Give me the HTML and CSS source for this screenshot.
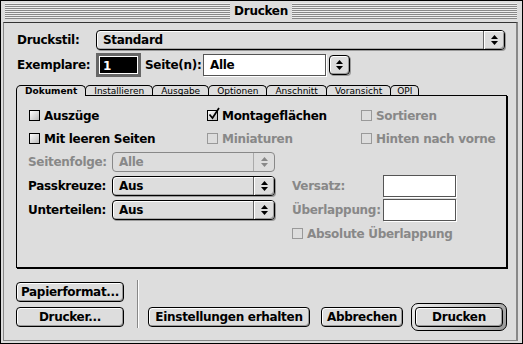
FILE: index.html
```html
<!DOCTYPE html>
<html lang="de">
<head>
    <meta charset="UTF-8">
    <title>Drucken</title>
    <link rel="stylesheet" href="styles.css">
</head>
<body>
<div class="window">
    <div class="titlebar">
        <div class="stripes"><span class="title">Drucken</span></div>
    </div>

    <div class="content">
        <div class="row row-style">
            <span class="label label-main">Druckstil:</span>
            <div class="popup popup-wide">
                <span class="popup-text">Standard</span>
                <span class="popup-arrow"><svg width="7" height="11" viewBox="0 0 7 11"><path d="M3.5 0 7 4H0zM0 6h7l-3.5 4z"/></svg></span>
            </div>
        </div>

        <div class="row row-copies">
            <span class="label label-main">Exemplare:</span>
            <div class="field field-focus"><span class="sel">1</span></div>
            <span class="label label-pages">Seite(n):</span>
            <div class="field field-pages">Alle</div>
            <div class="stepper"><svg width="7" height="11" viewBox="0 0 7 11"><path d="M3.5 0 7 4H0zM0 6h7l-3.5 4z"/></svg></div>
        </div>

        <div class="tabs">
            <span class="tab tab-active">Dokument</span>
            <span class="tab">Installieren</span>
            <span class="tab">Ausgabe</span>
            <span class="tab">Optionen</span>
            <span class="tab">Anschnitt</span>
            <span class="tab">Voransicht</span>
            <span class="tab tab-short">OPI</span>
        </div>

        <div class="panel">
            <div class="prow">
                <div class="check col1"><span class="box"></span>Auszüge</div>
                <div class="check col2"><span class="box"><svg class="tick" width="14" height="14" viewBox="0 0 14 14"><path d="M2.5 7.5 5.5 11 12 1"/></svg></span>Montageflächen</div>
                <div class="check disabled"><span class="box"></span>Sortieren</div>
            </div>
            <div class="prow">
                <div class="check col1"><span class="box"></span>Mit leeren Seiten</div>
                <div class="check col2 disabled"><span class="box"></span>Miniaturen</div>
                <div class="check disabled"><span class="box"></span>Hinten nach vorne</div>
            </div>
            <div class="prow prow-popup">
                <span class="label label-opt disabled">Seitenfolge:</span>
                <div class="popup popup-opt disabled">
                    <span class="popup-text">Alle</span>
                    <span class="popup-arrow"><svg width="7" height="11" viewBox="0 0 7 11"><path d="M3.5 0 7 4H0zM0 6h7l-3.5 4z"/></svg></span>
                </div>
            </div>
            <div class="prow prow-popup">
                <span class="label label-opt">Passkreuze:</span>
                <div class="popup popup-opt">
                    <span class="popup-text">Aus</span>
                    <span class="popup-arrow"><svg width="7" height="11" viewBox="0 0 7 11"><path d="M3.5 0 7 4H0zM0 6h7l-3.5 4z"/></svg></span>
                </div>
                <span class="label label-side disabled">Versatz:</span>
                <div class="field field-side"></div>
            </div>
            <div class="prow prow-popup">
                <span class="label label-opt">Unterteilen:</span>
                <div class="popup popup-opt">
                    <span class="popup-text">Aus</span>
                    <span class="popup-arrow"><svg width="7" height="11" viewBox="0 0 7 11"><path d="M3.5 0 7 4H0zM0 6h7l-3.5 4z"/></svg></span>
                </div>
                <span class="label label-side disabled">Überlappung:</span>
                <div class="field field-side"></div>
            </div>
            <div class="prow">
                <div class="check check-abs disabled"><span class="box"></span>Absolute Überlappung</div>
            </div>
        </div>

        <div class="bottom">
            <div class="btn-col">
                <button class="btn btn-side">Papierformat...</button>
                <button class="btn btn-side">Drucker...</button>
            </div>
            <div class="divider"></div>
            <div class="btn-row">
                <button class="btn btn-keep">Einstellungen erhalten</button>
                <button class="btn btn-cancel">Abbrechen</button>
                <div class="default-ring"><button class="btn btn-print">Drucken</button></div>
            </div>
        </div>
    </div>
</div>
</body>
</html>
```

FILE: styles.css
```css
body {
    margin: 0;
    background: #dddddd;
    font-family: "DejaVu Sans", sans-serif;
    font-size: 12px;
    font-weight: bold;
    letter-spacing: -0.3px;
    color: #000;
}

.window {
    width: 523px;
    height: 344px;
    box-sizing: border-box;
    border: 1px solid #000;
    background: #dddddd;
    padding: 0 4px 2px 2px;
    display: flex;
    flex-direction: column;
}

.titlebar {
    height: 21px;
    box-sizing: border-box;
    margin: 0 -4px 0 -2px;
    padding: 2px 5px 3px 4px;
}

.stripes {
    height: 16px;
    background: repeating-linear-gradient(to bottom, #eeeeee 0, #eeeeee 1px, #888888 1px, #888888 2px);
    text-align: center;
}

.title {
    display: inline-block;
    background: #dddddd;
    padding: 0 4px;
    line-height: 16px;
}

.content {
    flex: 1;
    border-top: 1px solid #333;
    border-left: 1px solid #888;
    border-right: 2px solid #888;
    border-bottom: 1px solid #888;
    padding: 7px 9px 0 12px;
}

.row {
    display: flex;
    align-items: center;
}

.row-style {
    height: 20px;
    margin-bottom: 3px;
    margin-right: 2px;
}

.row-copies {
    height: 24px;
}

.label-main {
    width: 79px;
    padding-left: 1px;
}

.label-pages {
    width: 58px;
    margin-left: 4px;
}

.disabled {
    color: #888;
}

/* popup menus */
.popup {
    display: flex;
    height: 20px;
    box-sizing: border-box;
    border: 1px solid #000;
    border-radius: 4px;
    background: #dddddd;
    box-shadow: inset 1px 1px 0 #fff, inset -1px -1px 0 #aaa, 1px 1px 0 #999;
}

.popup-wide {
    flex: 1;
}

.popup-text {
    flex: 1;
    padding-left: 6px;
    line-height: 18px;
}

.popup-arrow {
    width: 20px;
    border-left: 1px solid #666;
    border-radius: 0 3px 3px 0;
    box-shadow: inset 1px 1px 0 #fff, inset -1px -1px 0 #999;
    display: flex;
    align-items: center;
    justify-content: center;
}

.popup.disabled {
    border-color: #888;
    box-shadow: none;
}

.popup.disabled .popup-arrow {
    border-left-color: #aaa;
    box-shadow: none;
}

.popup.disabled svg {
    fill: #888;
}

/* edit fields */
.field {
    box-sizing: border-box;
    background: #fff;
    border: 1px solid #555;
    box-shadow: 1px 1px 0 #fff;
}

.field-focus {
    width: 45px;
    height: 24px;
    border: 3px solid #666;
    background: #000;
    box-shadow: inset 0 0 0 1px #fff;
    padding: 1px 0 0 4px;
    line-height: 18px;
}

.sel {
    color: #fff;
}

.field-pages {
    width: 123px;
    height: 22px;
    padding-left: 6px;
    line-height: 20px;
}

.stepper {
    width: 21px;
    height: 20px;
    margin-left: 3px;
    box-sizing: border-box;
    border: 1px solid #000;
    border-radius: 4px;
    box-shadow: inset 1px 1px 0 #fff, inset -1px -1px 0 #999, 1px 1px 0 #999;
    display: flex;
    align-items: center;
    justify-content: center;
}

/* tabs */
.tabs {
    display: flex;
    align-items: flex-start;
    height: 11px;
    margin-top: 8px;
    margin-bottom: -1px;
    position: relative;
    z-index: 1;
}

.tab {
    height: 10px;
    box-sizing: border-box;
    border: 1px solid #000;
    border-bottom: none;
    border-radius: 5px 5px 0 0;
    margin-right: -1px;
    padding: 0 8px;
    background: #dddddd;
    font-size: 9px;
    font-weight: normal;
    letter-spacing: 0;
    line-height: 10px;
}

.tab-active {
    height: 11px;
    font-weight: bold;
}

.tab-short {
    padding: 0 6px;
}

.panel {
    height: 173px;
    box-sizing: border-box;
    border: 1px solid #000;
    box-shadow: 1px 1px 0 #000;
    padding: 10px 0 0 11px;
    display: flex;
    flex-direction: column;
    gap: 4px;
}

.prow {
    display: flex;
    align-items: center;
    height: 19px;
}

.prow-popup {
    height: 20px;
}

/* checkboxes */
.check {
    display: flex;
    align-items: center;
    gap: 4px;
    margin-left: 1px;
}

.col1 {
    width: 177px;
}

.col2 {
    width: 153px;
}

.check-abs {
    margin-left: 264px;
}

.box {
    position: relative;
    width: 11px;
    height: 11px;
    box-sizing: border-box;
    border: 1px solid #000;
    background: linear-gradient(135deg, #fff, #bbb);
}

.check.disabled .box {
    border-color: #999;
    background: #dddddd;
}

.tick {
    position: absolute;
    left: -1px;
    top: -4px;
    fill: none;
    stroke: #000;
    stroke-width: 1.7;
}

.label-opt {
    width: 84px;
}

.popup-opt {
    width: 163px;
}

.label-side {
    width: 91px;
    margin-left: 17px;
}

.field-side {
    width: 73px;
    height: 22px;
}

/* buttons */
.bottom {
    display: flex;
    align-items: flex-start;
    margin-top: 14px;
}

.btn-col {
    display: flex;
    flex-direction: column;
    gap: 5px;
}

.btn {
    height: 20px;
    box-sizing: border-box;
    border: 1px solid #000;
    border-radius: 4px;
    background: #dddddd;
    box-shadow: inset 1px 1px 0 #fff, inset -1px -1px 0 #999;
    font: inherit;
    letter-spacing: inherit;
    color: #000;
    padding: 0;
    line-height: 18px;
}

.btn-side {
    width: 108px;
}

.divider {
    width: 1px;
    height: 48px;
    margin: -2px 0 0 13px;
    background: #888;
    border-right: 1px solid #fff;
}

.btn-row {
    display: flex;
    align-items: center;
    margin: 21px 0 0 9px;
}

.btn-keep {
    width: 162px;
}

.btn-cancel {
    width: 82px;
    margin-left: 11px;
}

.default-ring {
    margin-left: 8px;
    padding: 3px;
    border: 1px solid #000;
    border-radius: 7px;
    background: linear-gradient(135deg, #eee, #999);
}

.btn-print {
    display: block;
    width: 88px;
}
```
